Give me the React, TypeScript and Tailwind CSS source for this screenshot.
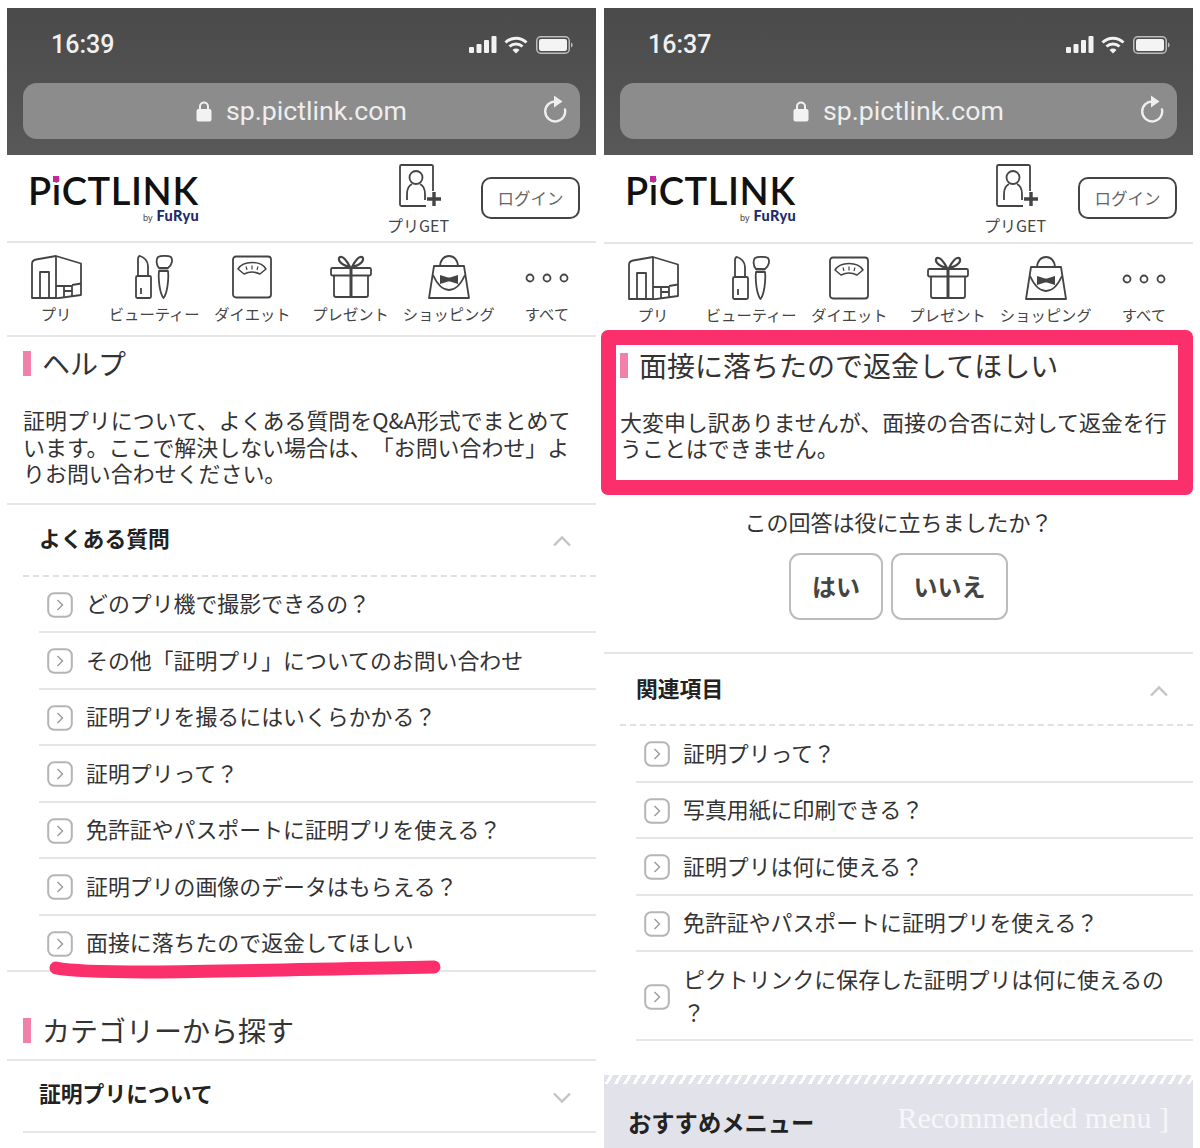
import React from "react";

const JP = "font-['Noto_Sans_CJK_JP','Liberation_Sans',sans-serif] [text-spacing-trim:space-all]";

const Lock = () => (
  <svg width="16" height="22" viewBox="0 0 16 22" fill="none">
    <path d="M4 10V6.500a4 4 0 0 1 8 0V10" stroke="#f2f2f2" strokeWidth="2" />
    <rect x="0.500" y="9" width="15" height="12.500" rx="2" fill="#f2f2f2" />
  </svg>
);

const Reload = () => (
  <svg width="26" height="30" viewBox="0 0 26 30" fill="none">
    <path d="M15 6.500a10 10 0 1 0 9 8" stroke="#eeeeee" strokeWidth="2.400" strokeLinecap="round" />
    <path d="M13 0.500l8.500 6-8.500 6z" fill="#eeeeee" />
  </svg>
);

const StatusIcons = () => (
  <div className="flex items-center gap-[7px]">
    <svg width="28" height="19" viewBox="0 0 28 19" fill="#f2f2f2">
      <rect x="0" y="12" width="5" height="6" rx="1" />
      <rect x="7.500" y="9" width="5" height="9" rx="1" />
      <rect x="15" y="5" width="5" height="13" rx="1" />
      <rect x="22.500" y="1" width="5" height="17" rx="1" />
    </svg>
    <svg width="24" height="18" viewBox="0 0 24 18" fill="none" stroke="#f2f2f2" strokeWidth="3">
      <path d="M1.500 6.500a15 15 0 0 1 21 0" />
      <path d="M5.500 10.500a9.500 9.500 0 0 1 13 0" />
      <path d="M12 17.500l-3.500-3.600a5 5 0 0 1 7 0z" fill="#f2f2f2" stroke="none" />
    </svg>
    <svg width="37" height="18" viewBox="0 0 37 18" fill="none" className="ml-[1px]">
      <rect x="0.750" y="0.750" width="32.500" height="16.500" rx="4" stroke="#bdbdbd" strokeWidth="1.500" />
      <rect x="3" y="3" width="28" height="12" rx="2.200" fill="#f4f4f4" />
      <path d="M35 6.500c1.200.4 1.600 1.400 1.600 2.500s-.4 2.100-1.600 2.500z" fill="#bdbdbd" />
    </svg>
  </div>
);

const TopBar = ({ time }: { time: string }) => (
  <div className="h-[147px] bg-gradient-to-b from-[#4a4a4a] to-[#585858] px-[16px] shrink-0">
    <div className="h-[75px] flex items-center justify-between pl-[28px] pr-[7px] pb-[2px]">
      <span className="font-['Roboto',sans-serif] font-medium text-[25px] text-[#f0f0f0]">{time}</span>
      <StatusIcons />
    </div>
    <div className="h-[56px] rounded-[14px] bg-[#8c8c8c] flex items-center relative justify-center">
      <div className="flex items-center gap-[14px] pl-[2px] pr-[2px]">
        <Lock />
        <span className="font-['Roboto',sans-serif] text-[26.700px] text-[#eeeeee] leading-none mt-[1px]">sp.pictlink.com</span>
      </div>
      <div className="absolute right-[13px] top-[12px]">
        <Reload />
      </div>
    </div>
  </div>
);

const Logo = () => (
  <div className="ml-[21px] mt-[17px] w-[172px]">
    <div className="font-['Lato',sans-serif] font-semibold text-[38px] leading-[36px] text-[#111111] tracking-[0.6px] whitespace-nowrap h-[36px]">
      P<span className="relative">i<span className="absolute left-[1px] top-[9px] w-[6px] h-[6px] bg-[#c2289b]" /></span>CTLINK
    </div>
    <div className="flex items-baseline justify-end gap-[4px] mt-[1px] pr-[1px] leading-[14px]">
      <span className="font-['Liberation_Sans',sans-serif] text-[9px] text-[#444444]">by</span>
      <span className="font-['Lato',sans-serif] font-black text-[14.500px] tracking-[0.3px] text-[#1d2a6b]">FuRyu</span>
    </div>
  </div>
);

const GetIcon = () => (
  <svg width="46" height="44" viewBox="0 0 46 44" fill="none" stroke="#444444" strokeWidth="1.800">
    <path d="M35 27V2.500a1.500 1.500 0 0 0-1.500-1.500H3.500A1.500 1.500 0 0 0 2 2.500v38A1.500 1.500 0 0 0 3.500 42H28" />
    <circle cx="18" cy="13.500" r="6.500" />
    <path d="M9 36v-6c0-6 3-9 5-10M27 36v-6c0-6-3-9-5-10" />
    <path d="M36 28v14M29 35h14" strokeWidth="3.400" />
  </svg>
);

const Header = ({ h }: { h: string }) => (
  <div className={`${h} flex items-start border-b-2 border-[#e6e6e6] shrink-0`}>
    <Logo />
    <div className="ml-auto w-[62px] mt-[9px] flex flex-col items-center">
      <div className="ml-[6px]">
        <GetIcon />
      </div>
      <span className={`${JP} text-[16px] leading-[20px] mt-[7px] text-[#444444] whitespace-nowrap`}>プリGET</span>
    </div>
    <div className={`${JP} ml-[32px] mr-[16px] mt-[22px] w-[99px] h-[42px] border-2 border-[#444444] rounded-[10px] flex items-center justify-center text-[16.500px] text-[#666666]`}>
      ログイン
    </div>
  </div>
);

const stroke = { fill: "none", stroke: "#444444", strokeWidth: 1.8, strokeLinejoin: "round" as const };

const IconKiosk = () => (
  <svg width="52" height="44" viewBox="0 0 52 44" className="ml-[1px]" {...stroke}>
    <path d="M1 43V9C1 6 2 5 5 4.500L25 1l25 7.500V40l-25 3.500z" />
    <path d="M25 1v42.500M1 43h24" />
    <path d="M9 43V17h9v26" />
    <path d="M25 31h8v11M33 31h8v10M41 30l9-1.500M33 36h8" />
  </svg>
);

const IconBeauty = () => (
  <svg width="38" height="44" viewBox="0 0 38 44" {...stroke}>
    <path d="M3 21V4c0-2 1-3 2-3 4 1 8 5 8 10v10z" />
    <rect x="1" y="21" width="15" height="22" rx="1.500" />
    <path d="M6 33v6" />
    <path d="M24 13c-3-3-3-9-1-11 3-1.500 10-1.500 13 0 2 3 1 8-3 11z" />
    <path d="M24 16h9c1 9-1 23-4.500 27C25 39 23 25 24 16z" />
    <path d="M24 13.500h9" />
  </svg>
);

const IconScale = () => (
  <svg width="40" height="44" viewBox="0 0 40 44" {...stroke}>
    <rect x="1" y="1.500" width="38" height="41" rx="3" />
    <path d="M6 14c3-5 8-6.500 14-6.500S31 9 34 14l-6 5c-3-1.500-5-2-8-2s-5 .5-8 2z" strokeWidth="1.500" />
    <path d="M14 11.500l1 3.500M20 10.500v4M26 11.500l-1 3.500" strokeWidth="1.200" />
  </svg>
);

const IconGift = () => (
  <svg width="42" height="44" viewBox="0 0 42 44" {...stroke}>
    <rect x="1" y="13" width="40" height="7.500" rx="1.500" />
    <path d="M4 20.500V40a2 2 0 0 0 2 2h30a2 2 0 0 0 2-2V20.500" />
    <path d="M21 12v30" strokeWidth="3" />
    <path d="M20 12c-3-6-7-11-10-10-3 2 0 8 10 10zM22 12c3-6 7-11 10-10 3 2 0 8-10 10z" strokeWidth="2.200" />
  </svg>
);

const IconBag = () => (
  <svg width="42" height="44" viewBox="0 0 42 44" {...stroke}>
    <path d="M12 12C12 5 16 1 21 1s9 4 9 11" />
    <path d="M6 11h30l5 32H1z" />
    <path d="M5 20c5 11 11 15 16 15s11-4 16-15" />
    <path d="M12 20l8 2.500h2l8-2.500v9l-8-2.500h-2l-8 2.500z" fill="#444444" stroke="none" />
  </svg>
);

const IconDots = () => (
  <svg width="46" height="44" viewBox="0 0 46 44" fill="none" stroke="#444444" strokeWidth="1.800">
    <circle cx="6" cy="23" r="3.500" />
    <circle cx="23" cy="23" r="3.500" />
    <circle cx="40" cy="23" r="3.500" />
  </svg>
);

const navItems: [React.ReactNode, string][] = [
  [<IconKiosk />, "プリ"],
  [<IconBeauty />, "ビューティー"],
  [<IconScale />, "ダイエット"],
  [<IconGift />, "プレゼント"],
  [<IconBag />, "ショッピング"],
  [<IconDots />, "すべて"],
];

const Nav = () => (
  <div className="h-[94px] grid grid-cols-6 border-b-2 border-[#e6e6e6] shrink-0">
    {navItems.map(([icon, label]) => (
      <div key={label} className="flex flex-col items-center pt-[12px]">
        <div className="h-[44px] flex items-center">{icon}</div>
        <span className={`${JP} mt-[4px] text-[15.300px] leading-[20px] text-[#444444] whitespace-nowrap`}>{label}</span>
      </div>
    ))}
  </div>
);

const SectionHeading = ({ children }: { children: React.ReactNode }) => (
  <div className="flex items-center h-[52px] pl-[16px] gap-[11px]">
    <div className="w-[8px] h-[25px] bg-[#f181aa]" />
    <h2 className={`${JP} text-[28px] leading-[34px] text-[#333333] whitespace-nowrap`}>{children}</h2>
  </div>
);

const Chevron = ({ up }: { up?: boolean }) => (
  <svg width="20" height="12" viewBox="0 0 20 12" fill="none" stroke="#c4c4c4" strokeWidth="2.400" className={up ? "mt-[5px]" : "mt-[8px]"}>
    <path d={up ? "M2 10.500l8-8 8 8" : "M2 1.500l8 8 8-8"} />
  </svg>
);

const AccHead = ({ title, up, dashed }: { title: string; up?: boolean; dashed?: boolean }) => (
  <div
    className={
      dashed
        ? "ml-[16px] h-[72px] pl-[16px] pr-[24px] pb-[2px] flex items-center justify-between border-b-2 border-dashed border-[#e0e0e0]"
        : "ml-[16px] h-[72px] pl-[16px] pr-[24px] pb-[5px] flex items-center justify-between border-b-2 border-[#e6e6e6]"
    }
  >
    <span className={`${JP} text-[21.800px] font-bold text-[#222222]`}>{title}</span>
    <Chevron up={up} />
  </div>
);

const RowIcon = () => (
  <svg width="26" height="26" viewBox="0 0 26 26" fill="none" className="shrink-0 mt-[2px]">
    <rect x="1.200" y="1.200" width="23.600" height="23.600" rx="6" stroke="#b5b5b5" strokeWidth="2" />
    <path d="M10.500 8l5 5-5 5" stroke="#999999" strokeWidth="1.400" />
  </svg>
);

const Row = ({ children, last, tall }: { children: React.ReactNode; last?: boolean; tall?: boolean }) => (
  <div
    className={
      (tall ? "h-[89px] " : "h-[56.500px] ") +
      (last ? "pl-[40px] " : "ml-[32px] pl-[8px] ") +
      "flex items-center gap-[13px] pr-[16px] border-b-2 border-[#e6e6e6] shrink-0"
    }
  >
    <RowIcon />
    <span className={`${JP} text-[21.900px] leading-[33px] mb-[2px] text-[#333333]`}>{children}</span>
  </div>
);

const Left = () => (
  <div className="w-[589px] shrink-0 relative flex flex-col">
    <TopBar time="16:39" />
    <Header h="h-[88px]" />
    <Nav />
    <SectionHeading>ヘルプ</SectionHeading>
    <p className={`${JP} mx-[16px] mt-[18px] pb-[16px] text-[21.950px] leading-[26.500px] text-[#333333]`}>
      証明プリについて、よくある質問をQ&amp;A形式でまとめています。ここで解決しない場合は、「お問い合わせ」よりお問い合わせください。
    </p>
    <div className="border-t-2 border-[#e6e6e6]" />
    <AccHead title="よくある質問" up dashed />
    <Row>どのプリ機で撮影できるの？</Row>
    <Row>その他「証明プリ」についてのお問い合わせ</Row>
    <Row>証明プリを撮るにはいくらかかる？</Row>
    <Row>証明プリって？</Row>
    <Row>免許証やパスポートに証明プリを使える？</Row>
    <Row>証明プリの画像のデータはもらえる？</Row>
    <Row last>面接に落ちたので返金してほしい</Row>
    <div className="mt-[32px] border-b-2 border-[#e6e6e6] pb-[3px]">
      <SectionHeading>カテゴリーから探す</SectionHeading>
    </div>
    <AccHead title="証明プリについて" />
    <svg className="absolute left-[40px] top-[952px]" width="396" height="26" viewBox="0 0 396 26" fill="none">
      <path d="M9 8c40 8 200 2 378-1" stroke="#fb2f6c" strokeWidth="13" strokeLinecap="round" />
    </svg>
  </div>
);

const Right = () => (
  <div className="w-[589px] shrink-0 relative flex flex-col">
    <TopBar time="16:37" />
    <Header h="h-[89px]" />
    <Nav />
    <div className="pt-[1px]">
      <SectionHeading>面接に落ちたので返金してほしい</SectionHeading>
    </div>
    <p className={`${JP} mx-[16px] mt-[18px] text-[21.950px] leading-[26px] text-[#333333]`}>
      大変申し訳ありませんが、面接の合否に対して返金を行うことはできません。
    </p>
    <p className={`${JP} mt-[45px] text-center text-[22px] leading-[30px] text-[#333333]`}>この回答は役に立ちましたか？</p>
    <div className="mt-[17px] flex justify-center gap-[8px]">
      <div className={`${JP} w-[94px] h-[67px] pb-[2px] border-2 border-[#bcbcbc] rounded-[11px] flex items-center justify-center text-[24px] font-bold text-[#444444]`}>はい</div>
      <div className={`${JP} w-[117px] h-[67px] pb-[2px] border-2 border-[#bcbcbc] rounded-[11px] flex items-center justify-center text-[24px] font-bold text-[#444444]`}>いいえ</div>
    </div>
    <div className="mt-[32px] border-t-2 border-[#e6e6e6]" />
    <AccHead title="関連項目" up dashed />
    <Row>証明プリって？</Row>
    <Row>写真用紙に印刷できる？</Row>
    <Row>証明プリは何に使える？</Row>
    <Row>免許証やパスポートに証明プリを使える？</Row>
    <Row tall>
      ピクトリンクに保存した証明プリは何に使えるの
      <br />？
    </Row>
    <div className="mt-[34px] h-[9px] bg-[repeating-linear-gradient(120deg,#e2e2ea_0,#e2e2ea_5px,#ffffff_5px,#ffffff_8px)]" />
    <div className="h-[76px] bg-[#e2e2ea] flex items-center justify-between pl-[24px] pr-[24px]">
      <span className={`${JP} text-[23.300px] font-bold text-[#222222]`}>おすすめメニュー</span>
      <span className="font-['Liberation_Serif',serif] text-[30px] text-[#f7f7fa] whitespace-nowrap -mt-[10px]">Recommended menu ]</span>
    </div>
    <div className="absolute -left-[3px] top-[322px] w-[592px] h-[165px] border-[15px] border-[#fb2f6c] rounded-[7px]" />
  </div>
);

export default function App() {
  return (
    <div className="w-[1200px] h-[1148px] overflow-hidden bg-white flex items-start gap-[8px] pl-[7px] pt-[8px]">
      <Left />
      <Right />
    </div>
  );
}
